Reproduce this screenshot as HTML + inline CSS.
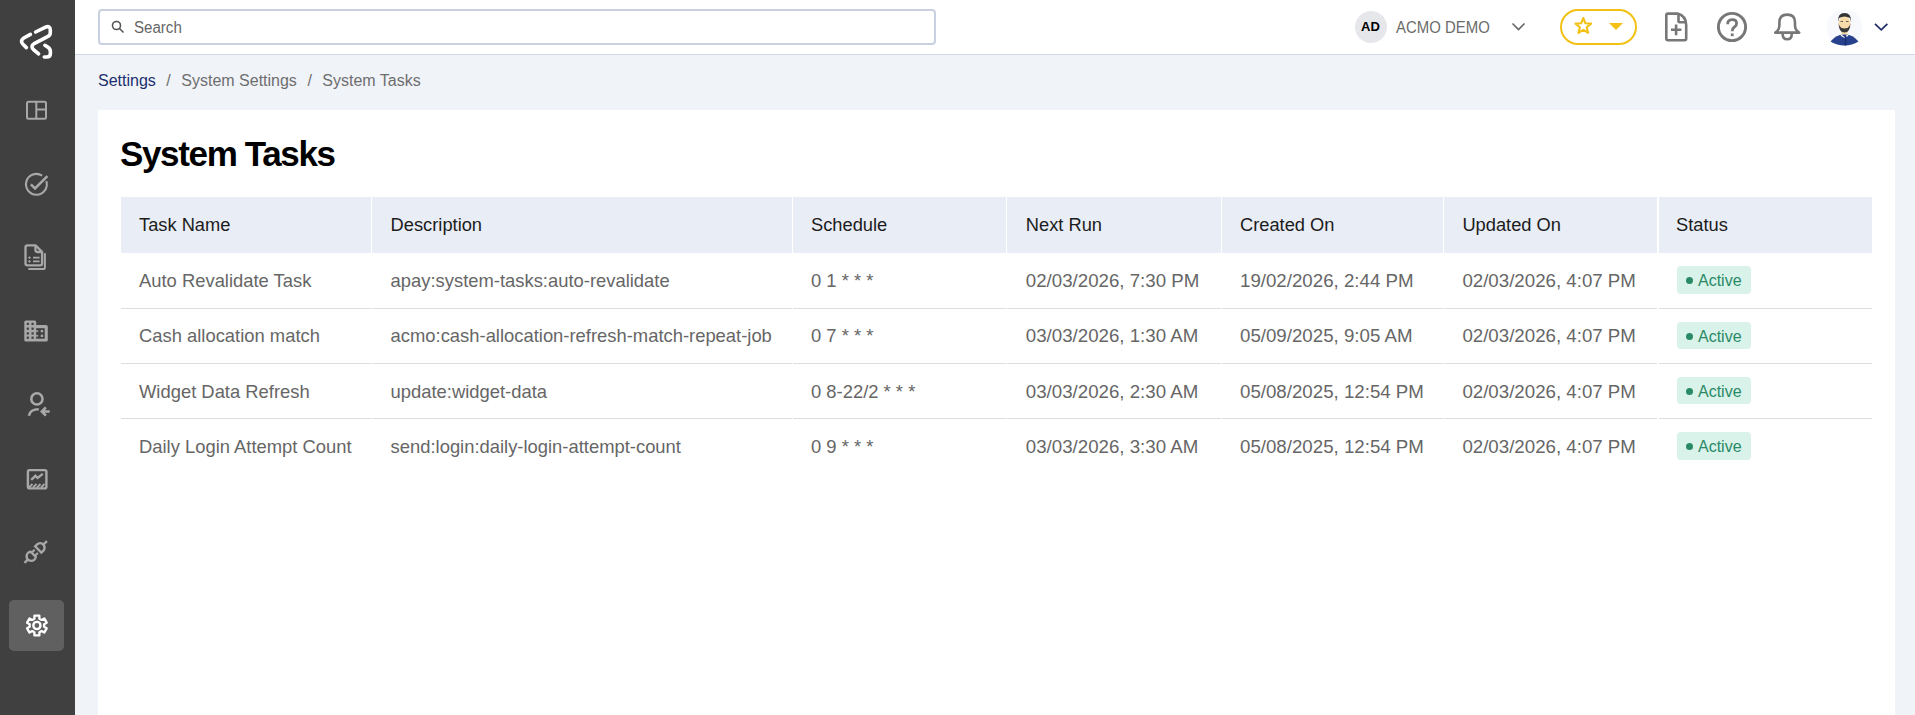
<!DOCTYPE html>
<html><head><meta charset="utf-8">
<style>
*{box-sizing:border-box;margin:0;padding:0}
html,body{width:1915px;height:715px;overflow:hidden;background:#f0f3f8;font-family:"Liberation Sans",sans-serif}
.abs{position:absolute}
#side{position:absolute;left:0;top:0;width:75px;height:715px;background:#404040}
#hdr{position:absolute;left:75px;top:0;width:1840px;height:55px;background:#fff;border-bottom:1px solid #d3d9e4}
#search{position:absolute;left:98px;top:9px;width:838px;height:36px;border:2px solid #c9d0e0;border-radius:4px;background:#fff}
#search span{position:absolute;left:34px;top:8px;font-size:16px;color:#666;transform:scaleX(0.943);transform-origin:0 0}
#crumb{position:absolute;left:98px;top:72px;font-size:16px;color:#6e6e6e;white-space:nowrap}
#crumb .a{color:#1b2f6e}
#crumb .sl{margin:0 10.5px 0 10.5px}
#card{position:absolute;left:98px;top:110px;width:1797px;height:620px;background:#fff}
#title{position:absolute;left:120px;top:134px;font-size:35px;font-weight:bold;color:#000;white-space:nowrap;letter-spacing:-1.35px}
#tbl{position:absolute;left:121px;top:197px;width:1751px}
#thead{position:absolute;left:0;top:0;width:1751px;height:56px;background:#e9edf5}
.ln{position:absolute;left:0;width:1751px;height:1px;background:#dedede}
.c{position:absolute;white-space:nowrap;font-size:18.4px;color:#666}
.h{color:#1c1c1c;font-size:18.3px}
.sep{position:absolute;top:0;width:1px;height:278px;background:#fff}
.badge{position:absolute;background:#d9f2ea;border-radius:4px;width:74px;height:27.5px}
.badge i{position:absolute;left:9px;top:11.2px;width:7px;height:7px;border-radius:50%;background:#2a8a66}
.badge span{position:absolute;left:21px;top:6px;font-size:16px;color:#2a8a66}
</style></head><body>
<div id="side">
<svg width="75" height="715" viewBox="0 0 75 715" style="position:absolute;left:0;top:0">
<g fill="none" stroke="#fff" stroke-width="3.6" stroke-linecap="round" stroke-linejoin="round">
<path d="M30.4 34.4 L23.8 38 Q19.6 40.8 23 44.3 L26.4 47.6"/>
<path d="M35.6 32 L45.6 27.2 Q50.3 25.3 50.3 30 L50.3 32.4 Q50.3 35.3 47.6 36.6 L34.6 43.3 Q29.8 46.3 33.8 49.8 L38.6 53.9"/>
<path d="M44.9 45.3 L48 47.3 Q50.4 48.8 50.4 51.5 L50.4 53.2 Q50.4 57 46.6 57 L44.3 57"/>
</g>
<g fill="none" stroke="#a8a8a8" stroke-width="2">
<rect x="27" y="101.8" width="19" height="17" rx="1.5"/>
<path d="M36.3 101.8 V118.8 M36.3 109.6 H46"/>
</g>
<g fill="none" stroke="#a8a8a8" stroke-width="2.1">
<path d="M46.3 181.1 A10.4 10.4 0 1 1 42.1 175.6"/>
<path d="M30.9 184.4 L35 188.5 L47.4 176.1" stroke-width="2.5"/>
</g>
<g fill="none" stroke="#a8a8a8" stroke-width="2.3" stroke-linejoin="round">
<path d="M27.5 245.3 H35.5 L42.1 251.9 V263.5 Q42.1 265.4 40.2 265.4 H27.4 Q25.5 265.4 25.5 263.5 V247.3 Q25.5 245.3 27.5 245.3Z"/>
<path d="M35.5 245.8 V250 Q35.5 252 37.5 252 H41.6"/>
<path d="M28.3 269.1 H43 Q44.9 269.1 44.9 267.2 V253.3" stroke-width="2"/>
<path d="M33 257.6 H39.6 M33 261.4 H39.6" stroke-width="1.8"/>
<path d="M28.3 257.6 H30.7 M29.5 256.4 V258.8 M28.3 261.4 H30.7 M29.5 260.2 V262.6" stroke-width="1.1"/>
</g>
<g fill="#a8a8a8">
<rect x="24.3" y="320.6" width="11.9" height="20.9" rx="1.6"/>
<rect x="35" y="325.1" width="12.8" height="16.4" rx="1.6"/>
<g fill="#404040">
<rect x="26.7" y="322.8" width="2.2" height="2.2"/><rect x="31.5" y="322.8" width="2.2" height="2.2"/>
<rect x="26.7" y="327.6" width="2.2" height="2.2"/><rect x="31.5" y="327.6" width="2.2" height="2.2"/>
<rect x="26.7" y="332.3" width="2.2" height="2.2"/><rect x="31.5" y="332.3" width="2.2" height="2.2"/>
<rect x="26.7" y="336.6" width="2.2" height="2.2"/><rect x="31.5" y="336.6" width="2.2" height="2.2"/>
<rect x="36.2" y="328.2" width="8.5" height="10.5"/>
</g>
<rect x="40.7" y="329.9" width="2.4" height="2.4"/><rect x="40.7" y="334.6" width="2.4" height="2.4"/>
<rect x="36.2" y="330.3" width="2" height="1.6"/><rect x="36.2" y="335" width="2" height="1.6"/>
</g>
<g fill="none" stroke="#a8a8a8" stroke-width="2.6">
<circle cx="36.9" cy="398.9" r="5.6"/>
<path d="M28.9 415.8 Q30 409.3 38.8 409.3"/>
<path d="M49.7 411.5 H42.5 M45.9 407.4 L41.8 411.5 L45.9 415.6"/>
</g>
<g fill="none" stroke="#a8a8a8" stroke-width="2.4">
<rect x="27.9" y="470.1" width="18.5" height="18.3" rx="1.6"/>
<path d="M31.2 479.8 L35.5 475.8 L37.6 478 L42.8 473.9"/>
<path d="M29 487.5 L32.5 484 M33 487.5 L36.5 484 M37 487.5 L40.5 484 M41 487.5 L44.5 484" stroke-width="1.8"/>
</g>
<g fill="none" stroke="#a8a8a8" stroke-width="2.4" transform="translate(35.85 551.8) rotate(-44)">
<path d="M-15.8 0 H-10.5"/>
<path d="M-3.6 -3.6 A4.6 4.6 0 1 0 -3.6 3.6 Z"/>
<path d="M-3 -2.3 H0.6 M-3 2.3 H0.6" stroke-width="2.1"/>
<path d="M3.3 -4.4 H6 A4.4 4.4 0 0 1 6 4.4 H3.3 Z"/>
<path d="M10.5 0 H15.5"/>
</g>
<rect x="9" y="600" width="55" height="51" rx="5" fill="#606060"/>
<g fill="none" stroke="#fff" stroke-width="2.3" stroke-linejoin="round">
<path d="M34.40 618.64 L34.43 615.60 L39.37 615.60 L39.40 618.64 L41.59 619.91 L44.24 618.41 L46.70 622.69 L44.09 624.23 L44.09 626.77 L46.70 628.31 L44.24 632.59 L41.59 631.09 L39.40 632.36 L39.37 635.40 L34.43 635.40 L34.40 632.36 L32.21 631.09 L29.56 632.59 L27.10 628.31 L29.71 626.77 L29.71 624.23 L27.10 622.69 L29.56 618.41 L32.21 619.91Z"/>
<circle cx="36.9" cy="625.5" r="3.6" stroke-width="2.4"/>
</g>
</svg>
</div>
<div id="hdr"></div>
<div id="search">
<svg style="position:absolute;left:11.2px;top:9px" width="14" height="14" viewBox="0 0 14 14"><circle cx="5.5" cy="5.5" r="4" fill="none" stroke="#555" stroke-width="1.6"/><path d="M8.5 8.5 L12.5 12.5" stroke="#555" stroke-width="1.6"/></svg>
<span>Search</span></div>
<div class="abs" style="left:1396px;top:18px;font-size:16.5px;color:#6b6b6b;white-space:nowrap;transform:scaleX(0.905);transform-origin:0 0">ACMO DEMO</div>
<svg class="abs" style="left:0;top:0" width="1915" height="55" viewBox="0 0 1915 55">
<circle cx="1371" cy="27" r="16" fill="#e6e7eb"/>
<text x="1370.5" y="31.4" text-anchor="middle" font-family="Liberation Sans" font-weight="bold" font-size="13" fill="#000">AD</text>
<path d="M1512.5 23.5 L1518.5 29.5 L1524.5 23.5" fill="none" stroke="#666" stroke-width="1.6"/>
<rect x="1561" y="10" width="75" height="34" rx="17" fill="none" stroke="#f3c114" stroke-width="2"/>
<path d="M1583.30 18.00 L1585.42 23.29 L1591.10 23.67 L1586.72 27.31 L1588.12 32.83 L1583.30 29.80 L1578.48 32.83 L1579.88 27.31 L1575.50 23.67 L1581.18 23.29Z" fill="none" stroke="#f3c114" stroke-width="2.1" stroke-linejoin="round"/>
<path d="M1609 23 H1623 L1616 30 Z" fill="#f3c114"/>
<g fill="none" stroke="#777" stroke-width="2.6" stroke-linejoin="round">
<path d="M1668 13.6 H1677.5 Q1686.2 16 1686.2 25 V38.5 Q1686.2 40.2 1684.5 40.2 H1668 Q1666.3 40.2 1666.3 38.5 V15.3 Q1666.3 13.6 1668 13.6Z"/>
<path d="M1678.5 14.5 V21 Q1678.5 22.2 1679.7 22.2 H1685.5"/>
<path d="M1671 29.8 H1681.4 M1676.1 24.5 V35.2"/>
<circle cx="1732" cy="27" r="13.6" stroke-width="2.9"/>
<path d="M1727.6 24.2 Q1727.6 19.6 1732.2 19.6 Q1736.6 19.6 1736.6 23.4 Q1736.6 25.5 1734.4 27 Q1732.2 28.5 1732.2 31.2" stroke-width="2.8" stroke-linejoin="miter"/>
<path d="M1775.2 32.6 Q1779.3 30.3 1779.4 25.5 L1779.4 22.3 Q1779.4 14.6 1787.2 14.6 Q1795 14.6 1795 22.3 L1795 25.5 Q1795.1 30.3 1799.2 32.6 Z"/>
<path d="M1782.6 33.8 Q1782.6 39.3 1787.2 39.3 Q1791.8 39.3 1791.8 33.8"/>
</g>
<rect x="1730.8" y="33.4" width="2.8" height="2.8" fill="#777"/>
<circle cx="1844.5" cy="27.5" r="18" fill="#f8f9fc"/>
<path d="M1830.5 41.5 Q1836 34.5 1844.5 34 Q1853 34.5 1858.5 41.5 Q1852 45.6 1844.5 45.6 Q1837 45.6 1830.5 41.5Z" fill="#27418c"/>
<path d="M1840 33.5 L1844.5 37 L1849 33.5 L1848 36 L1844.5 38 L1841 36Z" fill="#fff"/>
<rect x="1844.7" y="36" width="1.6" height="9.5" fill="#1a2d6e"/>
<rect x="1841.5" y="30" width="6" height="4.5" fill="#f6d9a6"/>
<ellipse cx="1844.5" cy="23.5" rx="5.8" ry="7.6" fill="#f7dba8"/>
<path d="M1838.6 23 Q1838.6 32.5 1844.5 32.5 Q1850.4 32.5 1850.4 23 L1849.5 26 Q1848 28.5 1844.5 28.5 Q1841 28.5 1839.5 26Z" fill="#383838"/>
<path d="M1838 22 Q1837.5 13 1844.5 13 Q1851.5 13 1851 22 L1850 18 Q1847 16.5 1844.5 16.5 Q1842 16.5 1839 18Z" fill="#333"/>
<path d="M1840.5 21.5 H1843 M1846 21.5 H1848.5" stroke="#555" stroke-width="0.9"/>
<path d="M1875 23.8 L1881.2 29.8 L1887.4 23.8" fill="none" stroke="#1f2d6b" stroke-width="1.7"/>
</svg>
<div id="crumb"><span class="a">Settings</span><span class="sl">/</span>System Settings<span class="sl">/</span>System Tasks</div>
<div id="card"></div>
<div id="title">System Tasks</div>
<div id="tbl">
<div id="thead"></div>
<div class="ln" style="top:111px"></div>
<div class="ln" style="top:166px"></div>
<div class="ln" style="top:221px"></div>
</div>
<!--CELLS-->
<div class="c h" style="left:139px;top:214px">Task Name</div>
<div class="c h" style="left:390.6px;top:214px">Description</div>
<div class="c h" style="left:811px;top:214px">Schedule</div>
<div class="c h" style="left:1025.8px;top:214px">Next Run</div>
<div class="c h" style="left:1240px;top:214px">Created On</div>
<div class="c h" style="left:1462.4px;top:214px">Updated On</div>
<div class="c h" style="left:1676px;top:214px">Status</div>
<div class="c" style="left:139px;top:269.8px">Auto Revalidate Task</div>
<div class="c" style="left:390.6px;top:269.8px">apay:system-tasks:auto-revalidate</div>
<div class="c" style="left:811px;top:269.8px">0 1 * * *</div>
<div class="c" style="left:1025.8px;top:269.8px;font-size:18.7px">02/03/2026, 7:30 PM</div>
<div class="c" style="left:1240px;top:269.8px;font-size:18.7px">19/02/2026, 2:44 PM</div>
<div class="c" style="left:1462.4px;top:269.8px;font-size:18.7px">02/03/2026, 4:07 PM</div>
<div class="badge" style="left:1677px;top:266.2px"><i></i><span>Active</span></div>
<div class="c" style="left:139px;top:325.1px">Cash allocation match</div>
<div class="c" style="left:390.6px;top:325.1px">acmo:cash-allocation-refresh-match-repeat-job</div>
<div class="c" style="left:811px;top:325.1px">0 7 * * *</div>
<div class="c" style="left:1025.8px;top:325.1px;font-size:18.7px">03/03/2026, 1:30 AM</div>
<div class="c" style="left:1240px;top:325.1px;font-size:18.7px">05/09/2025, 9:05 AM</div>
<div class="c" style="left:1462.4px;top:325.1px;font-size:18.7px">02/03/2026, 4:07 PM</div>
<div class="badge" style="left:1677px;top:321.5px"><i></i><span>Active</span></div>
<div class="c" style="left:139px;top:380.5px">Widget Data Refresh</div>
<div class="c" style="left:390.6px;top:380.5px">update:widget-data</div>
<div class="c" style="left:811px;top:380.5px">0 8-22/2 * * *</div>
<div class="c" style="left:1025.8px;top:380.5px;font-size:18.7px">03/03/2026, 2:30 AM</div>
<div class="c" style="left:1240px;top:380.5px;font-size:18.7px">05/08/2025, 12:54 PM</div>
<div class="c" style="left:1462.4px;top:380.5px;font-size:18.7px">02/03/2026, 4:07 PM</div>
<div class="badge" style="left:1677px;top:376.9px"><i></i><span>Active</span></div>
<div class="c" style="left:139px;top:435.8px">Daily Login Attempt Count</div>
<div class="c" style="left:390.6px;top:435.8px">send:login:daily-login-attempt-count</div>
<div class="c" style="left:811px;top:435.8px">0 9 * * *</div>
<div class="c" style="left:1025.8px;top:435.8px;font-size:18.7px">03/03/2026, 3:30 AM</div>
<div class="c" style="left:1240px;top:435.8px;font-size:18.7px">05/08/2025, 12:54 PM</div>
<div class="c" style="left:1462.4px;top:435.8px;font-size:18.7px">02/03/2026, 4:07 PM</div>
<div class="badge" style="left:1677px;top:432.2px"><i></i><span>Active</span></div>
<div class="sep" style="left:371px;top:197px"></div>
<div class="sep" style="left:792px;top:197px"></div>
<div class="sep" style="left:1006px;top:197px"></div>
<div class="sep" style="left:1221px;top:197px"></div>
<div class="sep" style="left:1443px;top:197px"></div>
<div class="sep" style="left:1657px;top:197px;width:2px"></div>
<!--/CELLS-->
</body></html>
